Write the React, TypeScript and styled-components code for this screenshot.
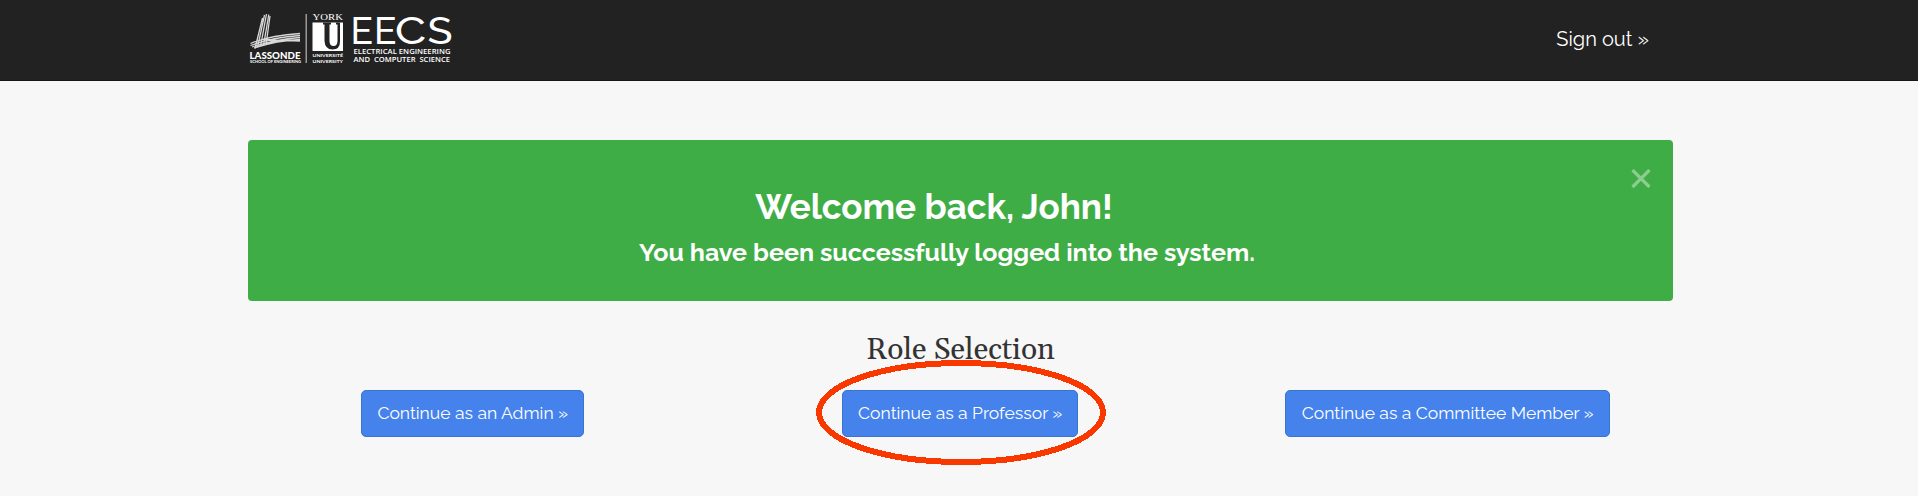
import React from "react";
import styled, { createGlobalStyle } from "styled-components";

const GlobalStyle = createGlobalStyle`
  * { box-sizing: border-box; }
  body {
    margin: 0;
    min-height: 496px;
    background: #f7f7f7;
    color: #333;
    font-family: Raleway, Lato, "Open Sans", sans-serif;
  }
`;

const Navbar = styled.header`
  height: 81px;
  padding: 0 269px 0 248px;
  display: flex;
  align-items: flex-start;
  justify-content: space-between;
  background: #222;
  border-bottom: 1px solid #1b1516;
`;

const Logo = styled.svg`
  display: block;
  width: 204px;
  height: 80px;
`;

const SignOut = styled.a`
  margin-top: 24px;
  font-size: 20px;
  line-height: 30px;
  color: #fff;
  text-decoration: none;
  white-space: nowrap;
`;

const Main = styled.main`
  width: 1425px;
  margin: 59px 0 0 248px;
`;

const Alert = styled.section`
  height: 161px;
  padding: 44px 22px 0 21px;
  display: grid;
  grid-template-columns: 1fr 20px;
  border-radius: 4px;
  background: #3fad46;
  color: #fff;
`;

const Message = styled.div`
  display: flex;
  flex-direction: column;
  align-items: center;
  padding: 1px 6px 0 0;
  white-space: nowrap;
`;

const Title = styled.h2`
  margin: 0 26px 0 0;
  font-size: 35px;
  line-height: 44px;
  font-weight: 700;
`;

const Subtitle = styled.h3`
  margin: 7px 0 0;
  font-size: 25px;
  line-height: 32px;
  font-weight: 700;
`;

const Close = styled.button`
  width: 20px;
  height: 20px;
  margin-top: -15px;
  padding: 0;
  border: 0;
  background: none;
  color: #8ccd90;
`;

const RoleHeading = styled.h2`
  margin: 29px 0 0;
  text-align: center;
  font-family: Gelasio, Georgia, "Liberation Serif", serif;
  font-size: 30px;
  line-height: 40px;
  font-weight: 400;
`;

const Roles = styled.div`
  display: grid;
  grid-template-columns: repeat(3, 487.5px);
  margin: 20px -19px 0;
  justify-items: center;
`;

const RoleCell = styled.div`
  position: relative;
`;

const RoleButton = styled.button<{ $width: number }>`
  display: block;
  width: ${(p) => p.$width}px;
  height: 47px;
  padding: 0 0 2px;
  border: 1px solid #3776cc;
  border-radius: 5px;
  background: #4582ec;
  color: #fff;
  font-family: inherit;
  font-size: 17.5px;
  white-space: nowrap;
`;

const Highlight = styled.svg`
  position: absolute;
  left: -26px;
  top: -30px;
  width: 290px;
  height: 105px;
  pointer-events: none;
`;

function EecsLogo() {
  return (
    <Logo viewBox="248 0 204 80" fill="#fff" aria-label="Lassonde York University EECS">
      <g fill="none" stroke="#d8d8d8" strokeWidth="1.3">
        <path d="M262.500 18 255 48.500M264.500 15 257.500 47.500M266.500 14 260.500 46.500M268.800 14.500 263.500 45.500M270 16 266 45" />
        <path d="M250.500 43.500Q270 35.500 300 33.500M250.500 45.500Q272 37.500 300 35.500M252 47Q274 39.500 300 37.500M254 48Q277 40.500 300 39.500M263 39.500Q280 40 300 41" />
      </g>
      <g fontFamily="Lato, sans-serif" fontWeight="900">
        <text x="249.500" y="59" fontSize="9.500" textLength="51" lengthAdjust="spacingAndGlyphs">LASSONDE</text>
        <text x="250" y="62.800" fontSize="3.500" fontWeight="700" textLength="51" lengthAdjust="spacingAndGlyphs">SCHOOL OF ENGINEERING</text>
      </g>
      <path d="M305.500 14h1.500v49h-1.500z" fill="#999" />
      <text x="312.500" y="20" fontFamily="Liberation Serif, serif" fontSize="9" textLength="30.500" lengthAdjust="spacingAndGlyphs">YORK</text>
      <path d="M312.500 22.500H343V51H312.500Z" />
      <path d="M323 22.500h8v2h-1.500V41q0 5 4 5t4-5V24.500H336v-2h4v19q0 8-7.500 8T324.500 41V24.500H323z" fill="#222" />
      <g fontFamily="Lato, sans-serif" fontSize="4.200" fontWeight="700">
        <text x="312.500" y="57" textLength="30.500" lengthAdjust="spacingAndGlyphs">UNIVERSITÉ</text>
        <text x="312.500" y="62.800" textLength="30.500" lengthAdjust="spacingAndGlyphs">UNIVERSITY</text>
      </g>
      <g fontFamily="Raleway, Lato, sans-serif" fontWeight="500" fontSize="37">
        <text x="350.500 374" y="44">EE</text>
        <text x="395" y="44" textLength="31" lengthAdjust="spacingAndGlyphs">C</text>
        <text x="427.500" y="44" textLength="25" lengthAdjust="spacingAndGlyphs">S</text>
      </g>
      <g fontFamily="Open Sans, sans-serif" fontSize="7" fontWeight="600">
        <text x="353.500" y="54" textLength="97" lengthAdjust="spacingAndGlyphs">ELECTRICAL ENGINEERING</text>
        <text x="353.500" y="62" textLength="96.500" lengthAdjust="spacingAndGlyphs">AND&#160; COMPUTER&#160; SCIENCE</text>
      </g>
    </Logo>
  );
}

export default function App() {
  return (
    <>
      <GlobalStyle />
      <Navbar>
        <EecsLogo />
        <SignOut>Sign out »</SignOut>
      </Navbar>
      <Main>
        <Alert>
          <Message>
            <Title>Welcome back, John!</Title>
            <Subtitle>You have been successfully logged into the system.</Subtitle>
          </Message>
          <Close aria-label="Close">
            <svg width="20" height="20" viewBox="0 0 20 20" stroke="currentColor" strokeWidth="3.2">
              <path d="M1.500 1 18.500 18M18.500 1 1.500 18" />
            </svg>
          </Close>
        </Alert>
        <RoleHeading>Role Selection</RoleHeading>
        <Roles>
          <RoleCell>
            <RoleButton $width={223}>Continue as an Admin »</RoleButton>
          </RoleCell>
          <RoleCell>
            <RoleButton $width={236}>Continue as a Professor »</RoleButton>
            <Highlight viewBox="0 0 290 105" fill="none" stroke="#f93800" strokeWidth="6" shapeRendering="crispEdges">
              <ellipse cx="145" cy="52.5" rx="142" ry="49.5" />
            </Highlight>
          </RoleCell>
          <RoleCell>
            <RoleButton $width={325}>Continue as a Committee Member »</RoleButton>
          </RoleCell>
        </Roles>
      </Main>
    </>
  );
}
